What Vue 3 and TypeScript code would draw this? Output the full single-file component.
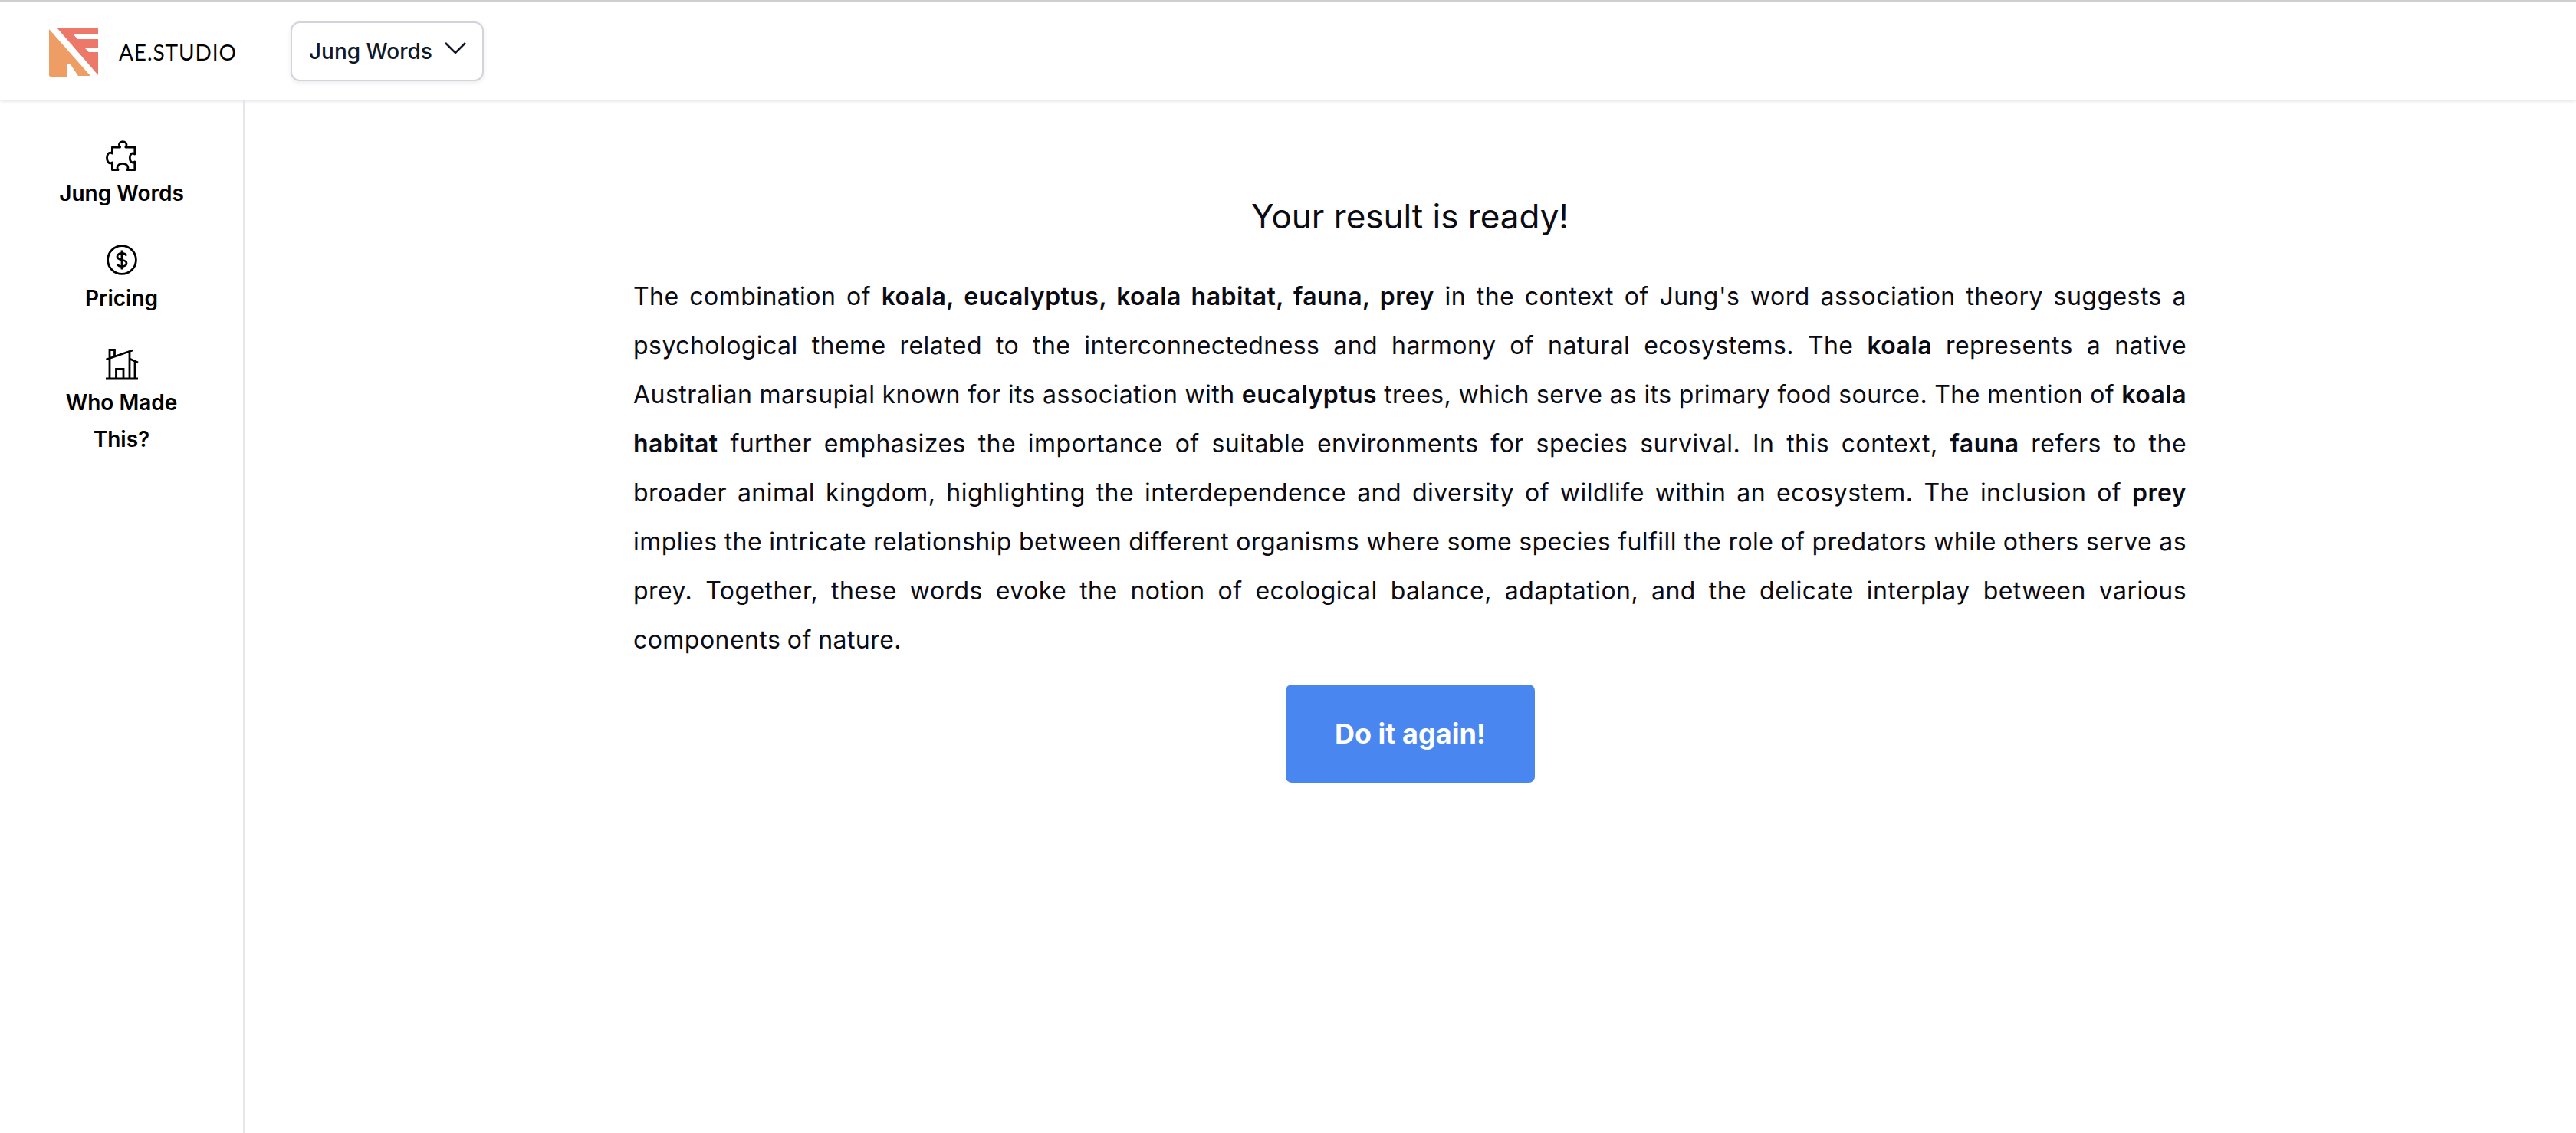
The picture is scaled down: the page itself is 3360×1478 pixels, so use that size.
<script setup lang="ts">
interface NavItem { label: string; icon: string }
const items: NavItem[] = [
  { label: 'Jung Words', icon: 'puzzle' },
  { label: 'Pricing', icon: 'dollar' },
  { label: 'Who Made This?', icon: 'building' },
]
</script>

<template>
  <div class="page">
    <header class="header">
      <div class="brand">
        <svg class="logo" width="66" height="66" viewBox="0 0 66 66">
          <path fill="#ee9d65" d="M1 3 L55 64 H39 L29 49 H24 V65 H3 Q1 65 1 63 Z" />
          <path fill="#ec7869" d="M11 1 H63 Q65 1 65 3 V10 H33 L38 16 H65 V28 H48 L53 33 H65 V63 Z" />
        </svg>
        <span class="brand-name">AE.STUDIO</span>
      </div>
      <button class="select">
        <span>Jung Words</span>
        <svg class="chev" width="30" height="18" viewBox="0 0 30 18">
          <path d="M2 2 L15 15 L28 2" fill="none" stroke="#111827" stroke-width="2.6" />
        </svg>
      </button>
    </header>
    <div class="body">
      <aside class="side">
        <a v-for="item in items" :key="item.label" class="nav">
          <svg class="icon" width="48" height="48" viewBox="0 0 48 48" fill="none" stroke="#000" stroke-width="2.8">
            <template v-if="item.icon === 'puzzle'">
              <path d="M11.4 14 H21.6 C20.6 12.8 20.4 11.8 20.4 10.8 A4.8 4.1 0 0 1 30 10.8 C30 11.8 29.8 12.8 28.8 14 H40.8 V23 C39.8 22.4 39 22 38 22 A3.7 6 0 0 0 38 34 C39 34 39.8 33.6 40.8 33 V43.7 H31 C31.6 42.7 32 41.8 32 40.8 A7 5.5 0 0 0 18 40.8 C18 41.8 18.4 42.7 19 43.7 H11.4 V34 C10.4 34.6 9.6 34.8 8.6 34.8 A4.1 6.8 0 0 1 8.6 21.2 C9.6 21.2 10.4 21.4 11.4 22 Z" stroke-linejoin="round" />
            </template>
            <template v-else-if="item.icon === 'dollar'">
              <circle cx="24" cy="24" r="18.4" />
              <path d="M24 11.5 V36.5 M30 18.5 C29 16.4 27 15.4 24 15.4 C20.5 15.4 18 17.1 18 19.8 C18 25.6 30 22.4 30 28.2 C30 30.9 27.4 32.6 24 32.6 C21 32.6 19 31.6 18 29.5" />
            </template>
            <template v-else>
              <path d="M3 43 H45 M3.5 18 L38 6 M8 43 V17 M8 16 V5.5 H14.5 V14 M34 8 V43 M34 17 L45 22 M41 20 V43 M16.5 43 V30.5 H26 V43" />
            </template>
          </svg>
          <span class="nav-label">{{ item.label }}</span>
        </a>
      </aside>
      <main class="main">
        <section class="result">
          <h1 class="title">Your result is ready!</h1>
          <p class="text">
            <span class="line">The combination of <strong>koala, eucalyptus, koala habitat, fauna, prey</strong> in the context of Jung's word association theory suggests a</span>
            <span class="line">psychological theme related to the interconnectedness and harmony of natural ecosystems. The <strong>koala</strong> represents a native</span>
            <span class="line">Australian marsupial known for its association with <strong>eucalyptus</strong> trees, which serve as its primary food source. The mention of <strong>koala</strong></span>
            <span class="line"><strong>habitat</strong> further emphasizes the importance of suitable environments for species survival. In this context, <strong>fauna</strong> refers to the</span>
            <span class="line">broader animal kingdom, highlighting the interdependence and diversity of wildlife within an ecosystem. The inclusion of <strong>prey</strong></span>
            <span class="line">implies the intricate relationship between different organisms where some species fulfill the role of predators while others serve as</span>
            <span class="line">prey. Together, these words evoke the notion of ecological balance, adaptation, and the delicate interplay between various</span>
            <span class="line last">components of nature.</span>
          </p>
          <button class="again">Do it again!</button>
        </section>
      </main>
    </div>
  </div>
</template>

<style>
html, body { margin: 0; background: #fff; }
</style>

<style scoped>
.page {
  height: 1478px;
  overflow: hidden;
  display: flex;
  flex-direction: column;
  font-family: Inter, "Liberation Sans", sans-serif;
  color: #000;
  background: #fff;
  border-top: 3px solid #cfcfd1;
  box-sizing: border-box;
}
.header {
  height: 127px;
  flex: none;
  display: flex;
  align-items: center;
  padding-left: 63px;
  background: #fff;
  box-shadow: 0 2px 5px #dfe1e6;
  position: relative;
  z-index: 1;
}
.brand { display: flex; align-items: center; width: 316px; }
.logo { flex: none; margin-top: 2px; }
.brand-name {
  margin-left: 26px;
  font-family: Lato, sans-serif;
  font-size: 28px;
  letter-spacing: 0.9px;
  color: #000;
  margin-top: 2px;
}
.select {
  width: 252px;
  height: 78px;
  box-sizing: border-box;
  display: flex;
  align-items: center;
  justify-content: space-between;
  padding: 0 20px 0 22px;
  background: #fff;
  border: 2px solid #d1d5db;
  border-radius: 12px;
  box-shadow: 0 2px 6px rgba(0, 0, 0, 0.08);
  font-family: inherit;
  font-size: 28px;
  font-weight: 500;
  color: #111827;
}
.chev { margin-top: -8px; }
.body { flex: 1; display: flex; min-height: 0; }
.side {
  width: 319px;
  box-sizing: border-box;
  flex: none;
  border-right: 2px solid #e5e7eb;
  padding: 48px 0 0;
  display: flex;
  flex-direction: column;
  align-items: center;
  gap: 38px;
}
.nav {
  width: 200px;
  display: flex;
  flex-direction: column;
  align-items: center;
  text-align: center;
}
.nav-label {
  font-size: 28px;
  line-height: 47.6px;
  font-weight: 600;
  display: block;
  width: 190px;
  margin-top: 3px;
}
.main { flex: 1; display: flex; justify-content: center; }
.result {
  width: 2026px;
  margin-left: -1px;
  display: flex;
  flex-direction: column;
  align-items: center;
}
.title {
  margin: 120px 0 0;
  font-size: 44px;
  line-height: 64px;
  font-weight: 400;
  color: #0b0b14;
}
.text {
  margin: 41px 0 0;
  font-size: 32px;
  line-height: 64px;
  letter-spacing: 0.45px;
  word-spacing: -1px;
  color: #0b0b14;
  width: 100%;
}
.line {
  display: block;
  text-align: justify;
  text-align-last: justify;
}
.line.last { text-align-last: left; }
.text strong { font-weight: 600; }
.again {
  margin-top: 26px;
  margin-left: 1px;
  width: 325px;
  height: 128px;
  border: none;
  border-radius: 8px;
  background: #4a86ef;
  color: #fff;
  font-family: inherit;
  font-size: 36px;
  font-weight: 700;
}
</style>
